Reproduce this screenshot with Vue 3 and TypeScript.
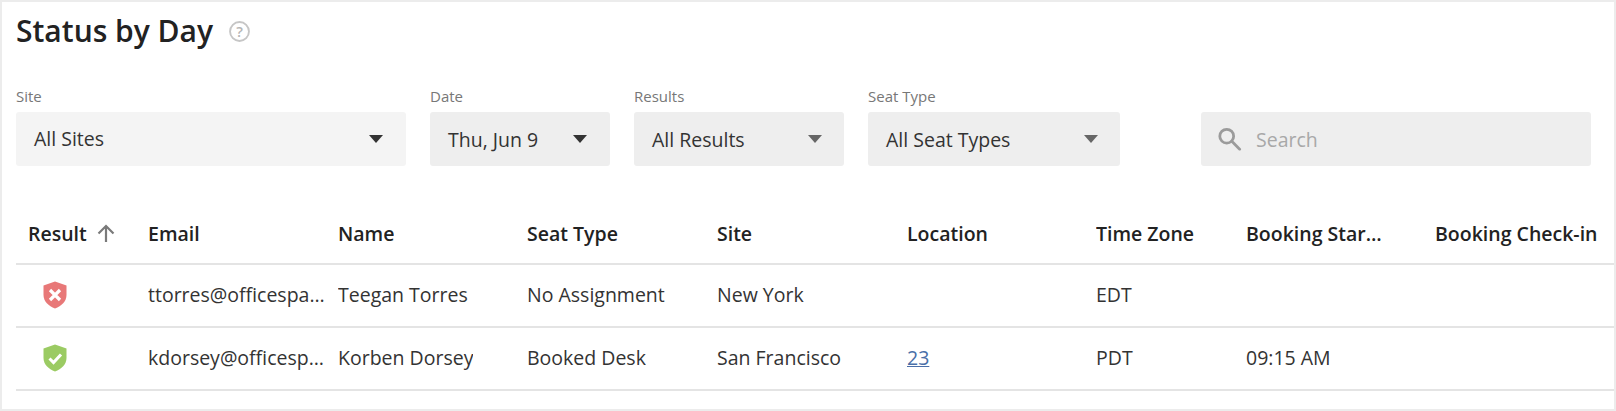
<script setup lang="ts">
interface Filter {
  label: string
  value: string
  size: string
  dark?: boolean
}

interface Row {
  ok: boolean
  email: string
  name: string
  seat: string
  site: string
  location: string
  zone: string
  start: string
}

const filters: Filter[] = [
  { label: 'Site', value: 'All Sites', size: 'site', dark: true },
  { label: 'Date', value: 'Thu, Jun 9', size: 'date', dark: true },
  { label: 'Results', value: 'All Results', size: 'results' },
  { label: 'Seat Type', value: 'All Seat Types', size: 'seat' },
]

const headers = ['Email', 'Name', 'Seat Type', 'Site', 'Location', 'Time Zone', 'Booking Start Time', 'Booking Check-in']

const rows: Row[] = [
  { ok: false, email: 'ttorres@officespacesoftware.com', name: 'Teegan Torres', seat: 'No Assignment', site: 'New York', location: '', zone: 'EDT', start: '' },
  { ok: true, email: 'kdorsey@officespacesoftware.com', name: 'Korben Dorsey', seat: 'Booked Desk', site: 'San Francisco', location: '23', zone: 'PDT', start: '09:15 AM' },
]
</script>

<template>
  <div class="panel">
    <div class="title-row">
      <h1 class="title">Status by Day</h1>
      <svg class="help" width="21" height="21" viewBox="0 0 20 20">
        <circle cx="10" cy="10" r="9" fill="none" stroke="#c6c6c6" stroke-width="1.8" />
        <text x="10" y="15" text-anchor="middle" class="help-mark">?</text>
      </svg>
    </div>

    <div class="filters">
      <div v-for="f in filters" :key="f.label" class="filter" :class="f.size">
        <label class="filter-label">{{ f.label }}</label>
        <div class="select">
          <span class="select-value">{{ f.value }}</span>
          <span class="caret" :class="{ dark: f.dark }"></span>
        </div>
      </div>
      <div class="search">
        <svg width="25" height="24" viewBox="0 0 26 26" fill="none" stroke="#9b9b9b" stroke-width="3">
          <circle cx="10" cy="10" r="7.5" />
          <path d="M15.5 15.5L24 24" stroke-linecap="round" />
        </svg>
        <span class="search-text">Search</span>
      </div>
    </div>

    <div class="table">
      <div class="row head">
        <div class="cell result-head">
          Result
          <svg class="sort" width="18" height="18" viewBox="0 0 18 18" fill="none" stroke="#7a7a7a" stroke-width="2.2">
            <path d="M9 18V2M1.5 9.5L9 2l7.5 7.5" />
          </svg>
        </div>
        <div v-for="h in headers" :key="h" class="cell">
          <span class="clip" :class="{ narrow: h === 'Booking Start Time' }">{{ h }}</span>
        </div>
      </div>
      <div v-for="r in rows" :key="r.email" class="row">
        <div class="cell icon-cell">
          <svg width="24" height="28" viewBox="0 0 24 28">
            <path d="M12 0.5L23.5 4.5V14C23.5 20.5 18.5 25 12 27.5C5.5 25 0.5 20.5 0.5 14V4.5Z" :fill="r.ok ? '#9bcb63' : '#e87878'" />
            <path v-if="r.ok" d="M6.5 14.5L10.5 18.5L18 10.5" fill="none" stroke="#fff" stroke-width="3" />
            <path v-else d="M7 9L17 19M17 9L7 19" fill="none" stroke="#fff" stroke-width="3.2" />
          </svg>
        </div>
        <div class="cell"><span class="clip">{{ r.email }}</span></div>
        <div class="cell"><span class="clip">{{ r.name }}</span></div>
        <div class="cell"><span class="clip">{{ r.seat }}</span></div>
        <div class="cell"><span class="clip">{{ r.site }}</span></div>
        <div class="cell"><a v-if="r.location" class="link" href="#">{{ r.location }}</a></div>
        <div class="cell">{{ r.zone }}</div>
        <div class="cell">{{ r.start }}</div>
        <div class="cell"></div>
      </div>
    </div>
  </div>
</template>

<style>
body {
  margin: 0;
  background: #fff;
}
</style>

<style scoped>
.panel {
  box-sizing: border-box;
  width: 1616px;
  height: 411px;
  border: 2px solid #ececec;
  padding: 0 0 0 14px;
  font-family: 'Open Sans', sans-serif;
  color: #333;
  overflow: hidden;
}

.title-row {
  display: flex;
  align-items: center;
  height: 58px;
}

.title {
  margin: 0;
  font-size: 30px;
  font-weight: 600;
  line-height: 58px;
  color: #222;
}

.help {
  margin-left: 16px;
}

.help-mark {
  font-family: 'Open Sans', sans-serif;
  font-size: 14px;
  font-weight: 600;
  fill: #b5b5b5;
}

.filters {
  display: flex;
  gap: 24px;
  margin-top: 25px;
}

.filter-label {
  display: block;
  height: 27px;
  font-size: 15px;
  line-height: 22px;
  color: #777;
}

.site { width: 390px; }
.date { width: 180px; }
.results { width: 210px; }
.seat { width: 252px; }

.select {
  display: flex;
  align-items: center;
  justify-content: space-between;
  box-sizing: border-box;
  height: 54px;
  padding: 0 23px 0 18px;
  border-radius: 3px;
  background: #eee;
  font-size: 19.5px;
}

.site .select {
  background: #f4f4f4;
}

.site .select-value {
  margin-top: -2px;
}

.results .select-value,
.seat .select-value {
  padding-top: 1px;
}

.caret {
  width: 0;
  height: 0;
  border-left: 7.5px solid transparent;
  border-right: 7.5px solid transparent;
  border-top: 8px solid #666;
}

.caret.dark {
  border-top-color: #333;
}

.results .caret,
.seat .caret {
  margin-right: -1px;
}

.search {
  display: flex;
  align-items: center;
  box-sizing: border-box;
  width: 390px;
  height: 54px;
  margin: 27px 0 0 57px;
  padding-left: 16px;
  border-radius: 3px;
  background: #eee;
}

.search-text {
  margin-left: 14px;
  font-size: 19.5px;
  color: #a8a8a8;
}

.table {
  margin-top: 37px;
}

.row {
  display: grid;
  grid-template-columns: 119px 190px 189px 190px 190px 189px 150px 189px 190px;
  align-items: center;
  height: 61px;
  border-bottom: 2px solid #e4e4e4;
  font-size: 19.5px;
}

.row:not(.head) .cell {
  padding-bottom: 2px;
}

.head {
  height: 60px;
  font-weight: 600;
  color: #222;
}

.cell {
  display: flex;
  align-items: center;
  min-width: 0;
  padding: 0 0 0 13px;
}

.result-head {
  padding-left: 12px;
}

.clip {
  overflow: hidden;
  white-space: nowrap;
  text-overflow: ellipsis;
}

.row .cell:nth-child(n + 2) .clip {
  max-width: 178px;
}

.row .cell .clip.narrow {
  max-width: 138px;
}

.sort {
  margin-left: 10px;
}

.row .icon-cell {
  padding-left: 27px;
  padding-bottom: 0;
}

.link {
  color: #4a6fa8;
}
</style>
